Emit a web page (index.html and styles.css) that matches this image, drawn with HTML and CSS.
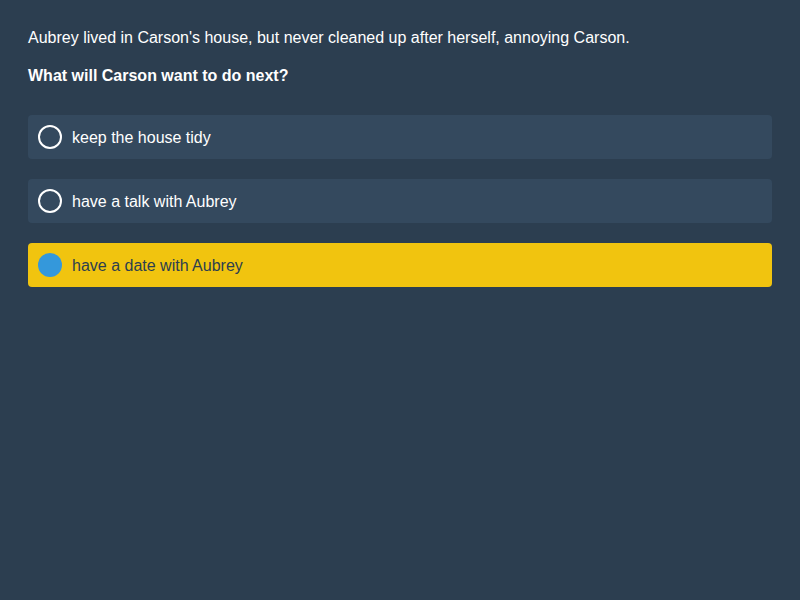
FILE: index.html
```html
<!DOCTYPE html>
<html>
<head>
<meta charset="utf-8">
<link rel="stylesheet" href="styles.css">
</head>
<body>
<div class="quiz">
  <p class="context">Aubrey lived in Carson's house, but never cleaned up after herself, annoying Carson.</p>
  <p class="question">What will Carson want to do next?</p>
  <div class="options">
    <div class="option"><span class="radio"></span><span class="label">keep the house tidy</span></div>
    <div class="option"><span class="radio"></span><span class="label">have a talk with Aubrey</span></div>
    <div class="option selected"><span class="radio"></span><span class="label">have a date with Aubrey</span></div>
  </div>
</div>
</body>
</html>
```
FILE: styles.css
```css
html, body {
  margin: 0;
  height: 100%;
  background: #2c3e50;
}
body {
  font-family: "Liberation Sans", Arial, sans-serif;
  font-size: 16px;
  color: #ffffff;
}
.quiz {
  padding: 29px 28px 28px;
}
.context {
  margin: 0;
  line-height: 18px;
}
.question {
  margin: 20px 0 30px;
  line-height: 18px;
  font-weight: bold;
}
.options {
  display: flex;
  flex-direction: column;
  gap: 20px;
}
.option {
  display: flex;
  align-items: center;
  gap: 10px;
  height: 44px;
  box-sizing: border-box;
  padding: 0 10px;
  background: #34495e;
  border-radius: 4px;
}
.label {
  padding-top: 2px;
}
.radio {
  width: 24px;
  height: 24px;
  box-sizing: border-box;
  border: 2px solid #ffffff;
  border-radius: 50%;
  flex: none;
}
.option.selected {
  background: #f1c40f;
  color: #2c3e50;
}
.option.selected .radio {
  border: none;
  background: #3498db;
}
```
